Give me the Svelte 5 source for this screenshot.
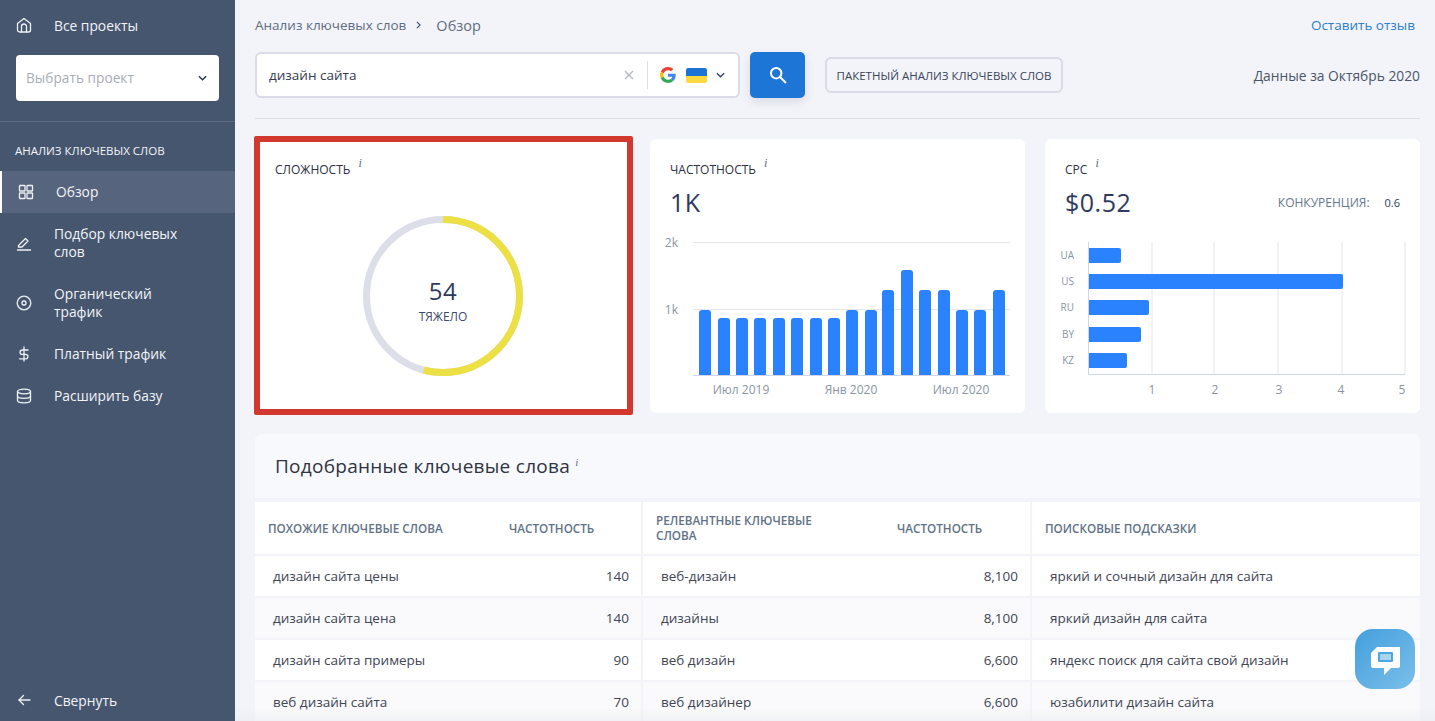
<script lang="ts">
  const navItems = [
    { icon: "grid", label: "Обзор", active: true },
    { icon: "pen", label: "Подбор ключевых слов" },
    { icon: "target", label: "Органический трафик" },
    { icon: "dollar", label: "Платный трафик" },
    { icon: "db", label: "Расширить базу" }
  ];

  const freqBars = [
    [699, 310], [718, 318], [736, 318], [754, 318], [773, 318], [791, 318],
    [810, 318], [828, 318], [846, 310], [865, 310], [882, 290], [901, 270],
    [919, 290], [938, 290], [956, 310], [974, 310], [993, 290]
  ];

  const cpcBars = [
    { code: "UA", y: 248, end: 1121 },
    { code: "US", y: 274, end: 1343 },
    { code: "RU", y: 300, end: 1149 },
    { code: "BY", y: 327, end: 1141 },
    { code: "KZ", y: 353, end: 1127 }
  ];
  const cpcGrid = [1152, 1214, 1278, 1342, 1405];
  const cpcTicks = [1152, 1215, 1279, 1341, 1402];

  const similar = [
    ["дизайн сайта цены", "140"],
    ["дизайн сайта цена", "140"],
    ["дизайн сайта примеры", "90"],
    ["веб дизайн сайта", "70"]
  ];
  const related = [
    ["веб-дизайн", "8,100"],
    ["дизайны", "8,100"],
    ["веб дизайн", "6,600"],
    ["веб дизайнер", "6,600"]
  ];
  const hints = [
    "яркий и сочный дизайн для сайта",
    "яркий дизайн для сайта",
    "яндекс поиск для сайта свой дизайн",
    "юзабилити дизайн сайта"
  ];

  const radius = 76.5;
  const circ = 2 * Math.PI * radius;
  const filled = circ * 0.54;
</script>

<div class="page">
  <aside class="sidebar">
    <a class="top-link">
      <svg class="nav-icon" viewBox="0 0 16 16"><path d="M1.500 6.500 8 1.500l6.500 5V13a2 2 0 0 1-2 2h-9a2 2 0 0 1-2-2z" /><path d="M5.500 15V9.500a2.500 2.500 0 0 1 5 0V15" /></svg>
      <span>Все проекты</span>
    </a>
    <div class="project-select">
      <span>Выбрать проект</span>
      <svg viewBox="0 0 10 6" class="chev"><path d="M1 1l4 4 4-4" /></svg>
    </div>
    <div class="side-divider"></div>
    <div class="side-title">АНАЛИЗ КЛЮЧЕВЫХ СЛОВ</div>
    <nav>
      {#each navItems as item}
        <a class="nav-item" class:active={item.active}>
          <svg class="nav-icon" viewBox="0 0 16 16">
            {#if item.icon === "grid"}
              <rect x="1.500" y="1.500" width="5.500" height="5.500" rx=".6" /><rect x="9" y="1.500" width="5.500" height="5.500" rx=".6" />
              <rect x="1.500" y="9" width="5.500" height="5.500" rx=".6" /><rect x="9" y="9" width="5.500" height="5.500" rx=".6" />
            {:else if item.icon === "pen"}
              <path d="M2.500 10.500 9.500 3.500l2.500 2.500-6 6H2.500z" /><path d="M1.500 15h13" />
            {:else if item.icon === "target"}
              <circle cx="8" cy="8" r="6.800" /><circle cx="8" cy="8" r="2" />
            {:else if item.icon === "dollar"}
              <path d="M8 1v14" /><path d="M12 4H6.300a2.200 2.200 0 0 0 0 4.400h3.400a2.200 2.200 0 0 1 0 4.400H3.500" />
            {:else}
              <ellipse cx="8" cy="3.500" rx="6.500" ry="2.300" /><path d="M1.500 3.500v9c0 1.300 2.900 2.300 6.500 2.300s6.500-1 6.500-2.300v-9" /><path d="M1.500 8c0 1.300 2.900 2.300 6.500 2.300s6.500-1 6.500-2.300" />
            {/if}
          </svg>
          <span>{item.label}</span>
        </a>
      {/each}
    </nav>
    <a class="collapse">
      <svg class="nav-icon" viewBox="0 0 16 16"><path d="M14 8H3" /><path d="M7.500 3.500 3 8l4.500 4.500" /></svg>
      <span>Свернуть</span>
    </a>
  </aside>

  <main class="content">
    <div class="crumbs">
      <div class="crumb-path">
        <span>Анализ ключевых слов</span>
        <svg viewBox="0 0 6 10" class="crumb-sep"><path d="M1 1l4 4-4 4" /></svg>
        <span class="crumb-current">Обзор</span>
      </div>
      <a class="feedback">Оставить отзыв</a>
    </div>

    <div class="search-row">
      <div class="search-box">
        <span class="query">дизайн сайта</span>
        <svg class="clear" viewBox="0 0 10 10"><path d="M1 1l8 8M9 1l-8 8" /></svg>
        <span class="search-sep"></span>
        <svg class="google" viewBox="0 0 48 48">
          <path fill="#EA4335" d="M24 9.500c3.500 0 6.700 1.200 9.200 3.600l6.900-6.900C35.900 2.400 30.500 0 24 0 14.600 0 6.500 5.400 2.600 13.200l8 6.200C12.400 13.700 17.700 9.500 24 9.500z" />
          <path fill="#4285F4" d="M47 24.500c0-1.600-.1-3.100-.4-4.500H24v9h12.900c-.6 3-2.300 5.500-4.800 7.200l7.700 6C44.300 37.900 47 31.800 47 24.500z" />
          <path fill="#FBBC05" d="M10.500 28.600c-.5-1.400-.8-3-.8-4.600s.3-3.200.8-4.600l-8-6.200C.9 16.500 0 20.100 0 24s.9 7.500 2.600 10.800z" />
          <path fill="#34A853" d="M24 48c6.500 0 11.900-2.100 15.900-5.800l-7.700-6c-2.200 1.400-4.900 2.300-8.200 2.300-6.300 0-11.600-4.200-13.500-9.900l-8 6.200C6.500 42.600 14.600 48 24 48z" />
        </svg>
        <span class="flag"></span>
        <svg viewBox="0 0 10 6" class="chev small"><path d="M1 1l4 4 4-4" /></svg>
      </div>
      <button class="search-btn" aria-label="Поиск">
        <svg viewBox="0 0 18 18"><circle cx="7.200" cy="7.200" r="5.200" /><path d="M11 11l6 6" /></svg>
      </button>
      <button class="batch-btn">ПАКЕТНЫЙ АНАЛИЗ КЛЮЧЕВЫХ СЛОВ</button>
      <span class="period">Данные за Октябрь 2020</span>
    </div>

    <div class="rule"></div>

    <div class="cards">
      <section class="card highlighted">
        <div class="card-title">СЛОЖНОСТЬ <i>i</i></div>
        <div class="gauge">
          <svg viewBox="0 0 160 160">
            <circle cx="80" cy="80" r={radius} class="track" />
            <circle cx="80" cy="80" r={radius} class="value" stroke-dasharray="{filled} {circ}" transform="rotate(-90 80 80)" />
          </svg>
          <div class="gauge-text">
            <div class="gauge-num">54</div>
            <div class="gauge-label">ТЯЖЕЛО</div>
          </div>
        </div>
      </section>

      <section class="card">
        <div class="card-title">ЧАСТОТНОСТЬ <i>i</i></div>
        <div class="big-num">1K</div>
        <svg class="chart" viewBox="650 235 375 170">
          <line x1="693" x2="1010" y1="242.500" y2="242.500" class="grid" />
          <line x1="693" x2="1010" y1="309.500" y2="309.500" class="grid" />
          {#each freqBars as [x, y]}
            <path d="M{x} 375V{y + 3}a3 3 0 0 1 3-3h6a3 3 0 0 1 3 3V375z" class="bar" />
          {/each}
          <line x1="693" x2="1010" y1="375.500" y2="375.500" class="axis" />
          <text x="678" y="247" text-anchor="end" class="tick">2k</text>
          <text x="678" y="314" text-anchor="end" class="tick">1k</text>
          <text x="741" y="394" text-anchor="middle" class="tick">Июл 2019</text>
          <text x="851" y="394" text-anchor="middle" class="tick">Янв 2020</text>
          <text x="961" y="394" text-anchor="middle" class="tick">Июл 2020</text>
        </svg>
      </section>

      <section class="card">
        <div class="card-title">CPC <i>i</i></div>
        <div class="cpc-row">
          <div class="big-num">$0.52</div>
          <div class="competition"><span>КОНКУРЕНЦИЯ:</span><b>0.6</b></div>
        </div>
        <svg class="chart" viewBox="1045 235 375 170">
          {#each cpcGrid as x}
            <line x1={x} x2={x} y1="242" y2="374" class="grid" />
          {/each}
          {#each cpcBars as b}
            <path d="M1089 {b.y}H{b.end - 2}a2 2 0 0 1 2 2v11a2 2 0 0 1-2 2H1089z" class="bar" />
            <text x="1074" y={b.y + 11} text-anchor="end" class="tick tiny">{b.code}</text>
          {/each}
          <path d="M1088.500 242V374.500H1405" class="axis" />
          {#each cpcTicks as x, i}
            <text x={x} y="394" text-anchor="middle" class="tick">{i + 1}</text>
          {/each}
        </svg>
      </section>
    </div>

    <section class="keywords">
      <h2>Подобранные ключевые слова <i>i</i></h2>
      <div class="kw-grid">
        <div class="kw-col">
          <div class="kw-head"><span>ПОХОЖИЕ КЛЮЧЕВЫЕ СЛОВА</span><span>ЧАСТОТНОСТЬ</span></div>
          {#each similar as [word, count]}
            <div class="kw-row"><span>{word}</span><span>{count}</span></div>
          {/each}
        </div>
        <div class="kw-col">
          <div class="kw-head"><span class="wrap">РЕЛЕВАНТНЫЕ КЛЮЧЕВЫЕ СЛОВА</span><span>ЧАСТОТНОСТЬ</span></div>
          {#each related as [word, count]}
            <div class="kw-row"><span>{word}</span><span>{count}</span></div>
          {/each}
        </div>
        <div class="kw-col">
          <div class="kw-head"><span>ПОИСКОВЫЕ ПОДСКАЗКИ</span></div>
          {#each hints as word}
            <div class="kw-row"><span>{word}</span></div>
          {/each}
        </div>
      </div>
    </section>

    <div class="fade"></div>
  </main>

  <button class="chat" aria-label="Чат">
    <svg viewBox="0 0 29 28">
      <path d="M6 0H29V19a2 2 0 0 1-2 2H20L13 28V21H2a2 2 0 0 1-2-2V6z" fill="#fff" />
      <rect x="7" y="5" width="15" height="10" rx="1" fill="#4ea6e0" />
      <rect x="9" y="7" width="11" height="6" fill="#a9d4f0" />
    </svg>
  </button>
</div>

<style>
  :global(body) {
    margin: 0;
    font-family: "Open Sans", "Noto Sans", sans-serif;
    background: #f3f4f9;
  }

  .page {
    display: flex;
    height: 721px;
    overflow: hidden;
    position: relative;
    background: #f3f4f9;
  }

  .sidebar {
    width: 235px;
    flex-shrink: 0;
    display: flex;
    flex-direction: column;
    background: #46566f;
    color: #f2f4f7;
    font-size: 13.800px;
  }

  .nav-icon {
    width: 16px;
    height: 16px;
    flex-shrink: 0;
    fill: none;
    stroke: #eef1f5;
    stroke-width: 1.300;
    stroke-linecap: round;
    stroke-linejoin: round;
  }

  .top-link {
    display: flex;
    align-items: center;
    gap: 22px;
    height: 20px;
    padding: 15px 0 0 16px;
  }

  .project-select {
    display: flex;
    align-items: center;
    justify-content: space-between;
    height: 45px;
    margin: 20px 16px 0;
    padding: 0 12px 1px 10px;
    background: #fff;
    border-radius: 4px;
    color: #a9adb5;
    font-size: 13.700px;
  }

  .chev {
    width: 9px;
    height: 6px;
    fill: none;
    stroke: #2b3550;
    stroke-width: 1.600;
  }

  .side-divider {
    height: 1px;
    margin-top: 20px;
    background: #5c6b83;
  }

  .side-title {
    margin: 21px 0 0 15px;
    height: 16px;
    font-size: 11.500px;
    line-height: 16px;
  }

  nav {
    margin-top: 12px;
  }

  .nav-item {
    display: flex;
    align-items: center;
    gap: 22px;
    min-height: 42px;
    padding: 0 40px 0 16px;
    line-height: 18px;
    box-sizing: border-box;
  }

  .nav-item:nth-child(2),
  .nav-item:nth-child(3) {
    min-height: 60px;
  }

  .nav-item.active {
    background: #56657d;
    border-left: 2px solid #fff;
    padding-left: 16px;
  }

  .collapse {
    display: flex;
    align-items: center;
    gap: 22px;
    margin-top: auto;
    padding: 0 0 11px 16px;
    height: 20px;
  }

  .content {
    flex: 1;
    min-width: 0;
    padding: 0 15px 0 20px;
    position: relative;
  }

  .crumbs {
    display: flex;
    align-items: center;
    justify-content: space-between;
    height: 20px;
    padding: 15px 5px 0 0;
    font-size: 13.500px;
    color: #5f6d80;
  }

  .crumb-path {
    display: flex;
    align-items: center;
    gap: 10px;
  }

  .crumb-current {
    margin-left: 5px;
    font-size: 14.500px;
  }

  .crumb-sep {
    width: 5px;
    height: 8px;
    fill: none;
    stroke: #46566f;
    stroke-width: 1.500;
  }

  .feedback {
    color: #2b7fc9;
  }

  .search-row {
    display: flex;
    align-items: center;
    margin-top: 17px;
  }

  .search-box {
    display: flex;
    align-items: center;
    box-sizing: border-box;
    width: 485px;
    height: 46px;
    padding: 0 13px 0 12px;
    background: #fff;
    border: 2px solid #d9dbe7;
    border-radius: 6px;
  }

  .query {
    flex: 1;
    font-size: 13.500px;
    color: #353c4e;
  }

  .clear {
    width: 10px;
    height: 10px;
    fill: none;
    stroke: #b4b7c2;
    stroke-width: 1.300;
  }

  .search-sep {
    width: 1px;
    height: 28px;
    margin: 0 12px 0 13px;
    background: #dcdee6;
  }

  .google {
    width: 16px;
    height: 16px;
  }

  .flag {
    width: 21px;
    height: 15px;
    margin: 0 9px 0 10px;
    border-radius: 2px;
    background: linear-gradient(#1c74d4 50%, #fdd83f 50%);
  }

  .chev.small {
    stroke: #3a4560;
  }

  .search-btn {
    width: 55px;
    height: 46px;
    margin-left: 10px;
    padding: 0;
    border: none;
    border-radius: 5px;
    background: #1d76d6;
    box-shadow: 0 4px 10px rgba(70, 86, 111, 0.15);
    display: flex;
    align-items: center;
    justify-content: center;
  }

  .search-btn svg {
    width: 18px;
    height: 18px;
    fill: none;
    stroke: #fff;
    stroke-width: 2;
  }

  .batch-btn {
    width: 238px;
    height: 36px;
    margin-left: 20px;
    padding: 0;
    border: 2px solid #d9dbe7;
    border-radius: 6px;
    background: #f3f4f9;
    font-family: inherit;
    font-size: 11.500px;
    color: #39445a;
  }

  .period {
    margin-left: auto;
    font-size: 13.800px;
    color: #4b5668;
  }

  .rule {
    height: 1px;
    margin-top: 20px;
    background: #dcdee8;
  }

  .cards {
    display: grid;
    grid-template-columns: repeat(3, 375px);
    column-gap: 20px;
    margin-top: 20px;
  }

  .card {
    height: 274px;
    background: #fff;
    border-radius: 6px;
    padding: 20px 20px 0;
    box-sizing: border-box;
    position: relative;
  }

  /* red annotation frame drawn over the card */
  .card.highlighted::after {
    content: "";
    position: absolute;
    left: -1px;
    top: -3px;
    right: -3px;
    bottom: -2px;
    border: 6px solid #d2382e;
    border-radius: 2px;
    pointer-events: none;
  }

  .card-title {
    height: 20px;
    font-size: 12px;
    line-height: 22px;
    color: #2b3042;
  }

  .card-title i {
    font-family: "Liberation Serif", serif;
    font-size: 12px;
    color: #5a6b80;
    position: relative;
    top: -7px;
    left: 5px;
  }

  .gauge {
    position: relative;
    width: 160px;
    height: 160px;
    margin: 37px 0 0 88px;
  }

  .gauge svg {
    display: block;
    width: 160px;
    height: 160px;
    fill: none;
    stroke-width: 7;
  }

  .track { stroke: #dcdfe8; }
  .value { stroke: #ece044; }

  .gauge-text {
    position: absolute;
    inset: 0;
    padding-top: 9px;
    display: flex;
    flex-direction: column;
    align-items: center;
    justify-content: center;
  }

  .gauge-num {
    font-size: 24px;
    line-height: 30px;
    color: #2e3a5e;
    letter-spacing: 0.5px;
  }

  .gauge-label {
    font-size: 12px;
    line-height: 18px;
    color: #3d4a68;
    margin-top: 2px;
  }

  .big-num {
    font-size: 25px;
    line-height: 30px;
    margin-top: 8px;
    color: #2e3a5e;
    letter-spacing: 0.5px;
  }

  .cpc-row {
    display: flex;
    align-items: center;
    justify-content: space-between;
  }

  .competition {
    display: flex;
    align-items: center;
    gap: 15px;
    margin-top: 8px;
    font-size: 12px;
    color: #66788c;
  }

  .competition b {
    font-size: 11px;
    font-weight: 400;
    color: #2e3a5e;
  }

  .chart {
    position: absolute;
    left: 0;
    top: 96px;
    width: 100%;
    height: 170px;
  }

  .grid {
    stroke: #e4e6ec;
    stroke-width: 1;
  }

  .axis {
    fill: none;
    stroke: #cdd6ea;
    stroke-width: 1;
  }

  .bar {
    fill: #2b82ff;
  }

  .tick {
    font-family: "Open Sans", sans-serif;
    font-size: 12px;
    fill: #8a94a3;
  }

  .tick.tiny {
    font-size: 10px;
  }

  .keywords {
    margin-top: 21px;
    border-radius: 6px 6px 0 0;
    overflow: hidden;
  }

  h2 {
    margin: 0;
    height: 64px;
    padding: 0 20px;
    background: #f8f9fc;
    font-size: 19px;
    font-weight: 400;
    letter-spacing: 0.27px;
    line-height: 64px;
    color: #2f3442;
  }

  h2 i {
    font-family: "Liberation Serif", serif;
    font-size: 11px;
    color: #5a6b80;
    position: relative;
    top: -7px;
  }

  .kw-grid {
    display: grid;
    grid-template-columns: 386px 387px 1fr;
    gap: 2px;
    margin-top: 4px;
    background: #f3f4f9;
  }

  .kw-col {
    display: flex;
    flex-direction: column;
    gap: 2px;
  }

  .kw-head {
    display: flex;
    align-items: center;
    height: 52px;
    padding-left: 13px;
    background: #fff;
    font-size: 11.700px;
    font-weight: 600;
    line-height: 15px;
    color: #5f7286;
  }

  .kw-head span:first-child {
    width: 241px;
    flex-shrink: 0;
  }

  .kw-head .wrap {
    padding-right: 60px;
    box-sizing: border-box;
  }

  .kw-row {
    display: flex;
    align-items: center;
    justify-content: space-between;
    height: 40px;
    padding: 0 12px 0 18px;
    background: #fff;
    font-size: 13.500px;
    color: #3f4553;
  }

  .kw-row:nth-of-type(odd) {
    background: #fafafc;
  }

  .fade {
    position: absolute;
    left: 0;
    right: 0;
    bottom: 0;
    height: 14px;
    background: linear-gradient(rgba(235, 236, 241, 0), rgba(235, 236, 241, 0.6));
    pointer-events: none;
  }

  .chat {
    position: absolute;
    left: 1355px;
    top: 629px;
    width: 60px;
    height: 60px;
    padding: 0;
    border: none;
    border-radius: 18px;
    background: linear-gradient(135deg, #439fdd, #7bbfe9);
    display: flex;
    align-items: center;
    justify-content: center;
  }

  .chat svg {
    width: 29px;
    height: 28px;
    margin-top: 4px;
  }
</style>
